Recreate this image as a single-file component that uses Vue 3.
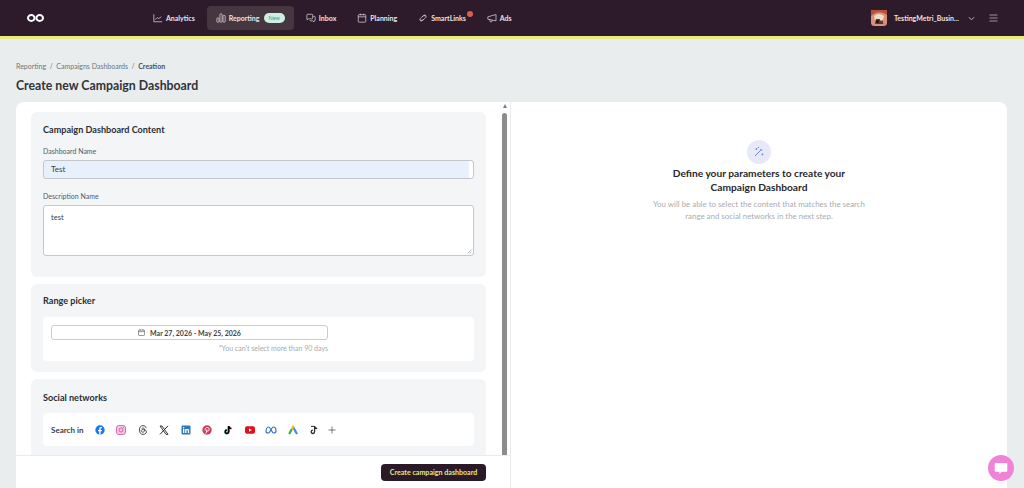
<script setup>
const navItems = [
  { label: "Analytics", icon: "analytics" },
  { label: "Reporting", icon: "reporting", active: true, badge: "New" },
  { label: "Inbox", icon: "inbox" },
  { label: "Planning", icon: "planning" },
  { label: "SmartLinks", icon: "links", dot: true },
  { label: "Ads", icon: "ads" },
];
</script>

<template>
  <div class="page">
    <header class="topbar">
      <svg class="logo" viewBox="0 0 17 8" width="17" height="8" fill="none" stroke="#fff" stroke-width="2">
        <ellipse cx="4.3" cy="4" rx="3.3" ry="3" />
        <ellipse cx="12.7" cy="4" rx="3.3" ry="3" />
      </svg>
      <nav class="nav">
        <a v-for="item in navItems" :key="item.label" class="nav-item" :class="{ active: item.active }">
          <svg class="nav-icon" viewBox="0 0 12 12" width="10" height="10" fill="none" stroke="#d9d3d8" stroke-width=".9">
            <template v-if="item.icon === 'analytics'">
              <path d="M1 1.5V10.5H11" />
              <path d="M2.5 8L5 5.5L6.8 6.8L10 4.5" />
            </template>
            <template v-else-if="item.icon === 'reporting'">
              <rect x="1" y="6" width="2.6" height="5" rx=".6" />
              <rect x="4.7" y="1" width="2.6" height="10" rx=".6" />
              <rect x="8.4" y="3" width="2.6" height="8" rx=".6" />
            </template>
            <template v-else-if="item.icon === 'inbox'">
              <path d="M1 2.5a1 1 0 0 1 1-1h5a1 1 0 0 1 1 1V6a1 1 0 0 1-1 1H3L1.2 8.2Z" />
              <path d="M8.6 4H10a1 1 0 0 1 1 1v3.4a1 1 0 0 1-1 1H9.7V10.6L8 9.4H5.6A1 1 0 0 1 4.6 8.4" />
            </template>
            <template v-else-if="item.icon === 'planning'">
              <rect x="1.5" y="2" width="9" height="9" rx="1" />
              <path d="M1.5 4.6H10.5M4 .8V2.8M8 .8V2.8" />
            </template>
            <template v-else-if="item.icon === 'links'">
              <path d="M2.4 8.6L4.8 8.8A2.4 2.4 0 0 0 6.6 8L9.6 5A1.8 1.8 0 0 0 7.2 2.6L5 4.8" />
              <path d="M9.5 3.4L7.2 3.2A2.4 2.4 0 0 0 5.4 4L2.4 7A1.8 1.8 0 0 0 4.8 9.4L7 7.2" />
            </template>
            <template v-else>
              <path d="M1 4.6L10.8 1.8V9.4L1 7.4Z" stroke-linejoin="round" />
              <path d="M3.4 7.9V9.6a.8.8 0 0 0 .8.8H5.4a.8.8 0 0 0 .8-.8V8.5" />
            </template>
          </svg>
          <span>{{ item.label }}</span>
          <span v-if="item.badge" class="badge">{{ item.badge }}</span>
          <i v-if="item.dot" class="dot"></i>
        </a>
      </nav>
      <div class="account">
        <svg class="avatar" viewBox="0 0 16 16" width="16" height="16">
          <rect width="16" height="16" rx="3.5" fill="#d9907f" />
          <path d="M0 6Q8 -1 16 5V0H0Z" fill="#b5533f" />
          <path d="M3 6Q8 2 13 6L12 10H4Z" fill="#f1dcc3" />
          <path d="M5 9h6l1.5 5H4Z" fill="#5c3a2c" />
          <circle cx="6.4" cy="11.6" r="1.6" fill="#1e1511" />
          <circle cx="10.2" cy="9.6" r="1.2" fill="#f6ead8" />
        </svg>
        <span class="account-name">TestingMetri_Busin...</span>
        <svg class="chevron" viewBox="0 0 8 5" width="7" height="5" fill="none" stroke="#cfc9ce" stroke-width="1">
          <path d="M1 1L4 4L7 1" />
        </svg>
        <svg class="burger" viewBox="0 0 9 8" width="9" height="8" fill="none" stroke="#a99fa8" stroke-width=".9">
          <path d="M.5 1H8.5M.5 4H8.5M.5 7H8.5" />
        </svg>
      </div>
    </header>

    <main class="content">
      <div class="crumbs">
        <span>Reporting</span><span>/</span><span>Campaigns Dashboards</span><span>/</span><b>Creation</b>
      </div>
      <h1 class="page-title">Create new Campaign Dashboard</h1>

      <section class="card">
        <div class="left">
          <div class="scroll-area">
            <div class="panel panel-form">
              <h2>Campaign Dashboard Content</h2>
              <label>Dashboard Name</label>
              <div class="input filled">Test</div>
              <label class="second">Description Name</label>
              <div class="input area">
                test
                <svg class="grip" viewBox="0 0 5 5" width="5" height="5" stroke="#8b8f93" stroke-width=".6">
                  <path d="M.5 4.5L4.5 .5M2.6 4.5L4.5 2.6" />
                </svg>
              </div>
            </div>

            <div class="panel panel-range">
              <h2>Range picker</h2>
              <div class="inner range-inner">
                <div class="date-field">
                  <svg viewBox="0 0 8 8" width="7" height="7" fill="none" stroke="#50545a" stroke-width=".7">
                    <rect x=".6" y="1.2" width="6.8" height="6.2" rx=".7" />
                    <path d="M.6 3H7.4M2.4 .3V1.8M5.6 .3V1.8" />
                  </svg>
                  <span>Mar 27, 2026 - May 25, 2026</span>
                </div>
                <p class="hint">*You can't select more than 90 days</p>
              </div>
            </div>

            <div class="panel panel-social">
              <h2>Social networks</h2>
              <div class="inner social-inner">
                <span class="search-label">Search in</span>
                <div class="networks">
                  <svg viewBox="0 0 10 10" width="10" height="10">
                    <circle cx="5" cy="5" r="4.7" fill="#1877f2" />
                    <path d="M4.2 9.7V6.3H3V4.9H4.2V3.9C4.2 2.7 4.9 2 6 2L6.9 2.1V3.3H6.3C5.7 3.3 5.6 3.6 5.6 4V4.9H6.9L6.7 6.3H5.6V9.7Z" fill="#fff" />
                  </svg>
                  <svg viewBox="0 0 10 10" width="10" height="10" fill="none">
                    <rect x=".5" y=".5" width="9" height="9" rx="2.4" fill="#f4c7e4" stroke="#d85fa8" stroke-width=".9" />
                    <circle cx="5" cy="5" r="2" stroke="#c94f9c" stroke-width=".8" />
                    <circle cx="7.4" cy="2.6" r=".5" fill="#c94f9c" />
                  </svg>
                  <svg viewBox="0 0 10 10" width="10" height="10" fill="none" stroke="#3a3a3a" stroke-width=".9">
                    <path d="M8.2 3.2C7.8 1.4 6.6.6 5 .6 2.6.6 1.4 2.4 1.4 5S2.6 9.4 5 9.4c2 0 3.4-1.1 3.4-2.5 0-1.5-1.4-2.3-3.2-2.3-1.2 0-2 .5-2 1.3S4 7.2 4.8 7.2C6 7.2 6.6 6.2 6.6 5 6.6 3.8 6 3 5 3 4.4 3 3.9 3.3 3.6 3.7" />
                  </svg>
                  <svg viewBox="0 0 10 10" width="10" height="10" fill="none" stroke="#222" stroke-width="1">
                    <path d="M9 .8L1 9.4" />
                    <path d="M1 1H3L9 9.4H7Z" stroke-width=".9" />
                  </svg>
                  <svg viewBox="0 0 10 10" width="10" height="10">
                    <rect x=".5" y=".5" width="9" height="9" rx="1" fill="#2f78b7" />
                    <rect x="2" y="4" width="1.3" height="4" fill="#fff" />
                    <circle cx="2.65" cy="2.7" r=".75" fill="#fff" />
                    <path d="M4.2 4H5.4V4.6C5.7 4.1 6.2 3.9 6.7 3.9 7.6 3.9 8.1 4.5 8.1 5.6V8H6.8V5.9C6.8 5.3 6.6 5 6.2 5 5.7 5 5.5 5.3 5.5 5.9V8H4.2Z" fill="#fff" />
                  </svg>
                  <svg viewBox="0 0 10 10" width="10" height="10">
                    <circle cx="5" cy="5" r="4.7" fill="#d13a5c" />
                    <path d="M4 8.6L5 4.4M3.3 5.5C2.6 3.8 3.8 2.4 5.2 2.4 6.6 2.4 7.4 3.4 7.1 4.8 6.8 6.2 5.4 6.8 4.6 5.8" fill="none" stroke="#fff" stroke-width=".9" />
                  </svg>
                  <svg viewBox="0 0 10 10" width="10" height="10" fill="none">
                    <path d="M5.6 1V6.8A1.7 1.7 0 1 1 3.9 5.1M5.6 1.3C5.9 2.6 6.8 3.4 8.2 3.5" stroke="#25e0da" stroke-width="1.5" transform="translate(-.4 .2)" />
                    <path d="M5.6 1V6.8A1.7 1.7 0 1 1 3.9 5.1M5.6 1.3C5.9 2.6 6.8 3.4 8.2 3.5" stroke="#f0305a" stroke-width="1.5" transform="translate(.4 -.1)" />
                    <path d="M5.6 1V6.8A1.7 1.7 0 1 1 3.9 5.1M5.6 1.3C5.9 2.6 6.8 3.4 8.2 3.5" stroke="#000" stroke-width="1.5" />
                  </svg>
                  <svg viewBox="0 0 10 10" width="10" height="10">
                    <rect y="1.3" width="10" height="7.4" rx="2" fill="#e0101a" />
                    <path d="M4 3.3L6.8 5L4 6.7Z" fill="#fff" />
                  </svg>
                  <svg class="meta" viewBox="0 0 12 10" width="12" height="10" fill="none" stroke="#2f6fc0" stroke-width="1.2">
                    <path d="M1 6.6C1 4 2.2 2 3.6 2 5.6 2 6.4 8 8.8 8 10.2 8 11 7.2 11 5.8 11 3.6 9.8 2 8.4 2 6.4 2 5.6 8 3 8 1.8 8 1 7.6 1 6.6Z" />
                  </svg>
                  <svg viewBox="0 0 10 10" width="10" height="10" fill="none" stroke-linecap="round" stroke-width="2.2">
                    <path d="M5 2L8.6 8.2" stroke="#4285f4" />
                    <path d="M5 2L3.2 5.2" stroke="#fbbc04" />
                    <path d="M3.2 5.2L1.6 8.2" stroke="#34a853" />
                  </svg>
                  <svg viewBox="0 0 10 10" width="10" height="10" fill="none" stroke="#2b2b2b" stroke-width="1.3">
                    <path d="M5.6 1V6.8A1.7 1.7 0 1 1 3.9 5.1M5.6 1.3C5.9 2.6 6.8 3.4 8.2 3.5" />
                    <path d="M2 1.4H5" stroke-width="1" />
                  </svg>
                  <svg class="plus" viewBox="0 0 8 8" width="8" height="8" stroke="#55595e" stroke-width=".8">
                    <path d="M4 .5V7.5M.5 4H7.5" />
                  </svg>
                </div>
              </div>
            </div>

            <div class="scrollbar">
              <i class="scroll-arrow"></i>
              <i class="scroll-thumb"></i>
            </div>
          </div>

          <footer class="footer">
            <button class="create-btn">Create campaign dashboard</button>
          </footer>
        </div>

        <div class="right">
          <div class="wand">
            <svg viewBox="0 0 12 12" width="12" height="12" fill="none" stroke="#5867c4" stroke-width=".8">
              <path d="M2 10L8.6 3.4M7.4 2.9L9.1 4.6" />
              <path d="M3.4 2V4M2.4 3H4.4M9.4 7.4V9.4M8.4 8.4H10.4M5.4 1V2M4.9 1.5H5.9" stroke-width=".6" />
            </svg>
          </div>
          <h3>Define your parameters to create your<br />Campaign Dashboard</h3>
          <p>You will be able to select the content that matches the search<br />range and social networks in the next step.</p>
        </div>
      </section>
    </main>

    <button class="chat">
      <svg viewBox="0 0 14 13" width="14" height="13">
        <path d="M1.5 1H12.5A.8.8 0 0 1 13.3 1.8V9A.8.8 0 0 1 12.5 9.8H7.6L5.4 12V9.8H1.5A.8.8 0 0 1 .7 9V1.8A.8.8 0 0 1 1.5 1Z" fill="#fff" />
      </svg>
    </button>
  </div>
</template>

<style>
html,
body {
  margin: 0;
  height: 100%;
  overflow: hidden;
}
</style>

<style scoped>
.page {
  height: 100vh;
  display: flex;
  flex-direction: column;
  background: #e9edee;
  color: #2b2d31;
  font-family: Lato, "Open Sans", sans-serif;
}
.topbar {
  flex: none;
  height: 37px;
  box-sizing: border-box;
  display: flex;
  align-items: center;
  background: #2d1b2c;
  border-bottom: 1px solid #1c0f18;
  padding-left: 27px;
  padding-right: 26px;
  position: relative;
  margin-bottom: 3px;
}
.topbar::after {
  content: "";
  position: absolute;
  left: 0;
  right: 0;
  top: 36px;
  height: 3px;
  background: #e8ec80;
}
.logo {
  flex: none;
}
.nav {
  display: flex;
  align-items: center;
  gap: 3px;
  margin-left: 100px;
}
.nav-item {
  position: relative;
  display: flex;
  align-items: center;
  gap: 3px;
  height: 24px;
  padding: 0 9px;
  border-radius: 4px;
  color: #e8e3e7;
  font-size: 7px;
  font-weight: 700;
}
.nav-item.active {
  background: #46363f;
}
.nav-icon {
  flex: none;
}
.badge {
  margin-left: 1px;
  padding: 0 5px;
  height: 10px;
  line-height: 10px;
  border-radius: 6px;
  background: #cdeee0;
  color: #4c9a80;
  font-size: 5.5px;
  font-weight: 400;
}
.dot {
  position: absolute;
  top: 5px;
  right: 2px;
  width: 6px;
  height: 6px;
  border-radius: 50%;
  background: #dc5f4d;
}
.account {
  margin-left: auto;
  display: flex;
  align-items: center;
}
.account-name {
  margin-left: 7px;
  color: #e8e3e7;
  font-size: 7px;
  font-weight: 700;
}
.chevron {
  margin-left: 9px;
}
.burger {
  margin-left: 14px;
}
.content {
  flex: 1;
  min-height: 0;
  display: flex;
  flex-direction: column;
  padding: 21px 17px 0 16px;
}
.crumbs {
  display: flex;
  gap: 3.5px;
  font-size: 7px;
  line-height: 10px;
  color: #70767c;
}
.crumbs b {
  color: #4a4e54;
  font-weight: 700;
}
.page-title {
  margin: 7px 0 8px;
  font-size: 12.3px;
  line-height: 16px;
  font-weight: 700;
  color: #303338;
}
.card {
  flex: 1;
  min-height: 0;
  display: flex;
  background: #fff;
  border-radius: 8px 8px 0 0;
}
.left {
  flex: none;
  width: 495px;
  display: flex;
  flex-direction: column;
  border-right: 1px solid #e8eaec;
  box-sizing: border-box;
}
.scroll-area {
  position: relative;
  flex: 1;
  min-height: 0;
  overflow: hidden;
  padding: 10px 24px 0 15px;
  display: flex;
  flex-direction: column;
  gap: 7px;
}
.panel {
  flex: none;
  background: #f3f5f7;
  border-radius: 6px;
  padding: 12px 12px 0;
  box-sizing: border-box;
}
.panel-form {
  height: 165px;
}
.panel-range {
  height: 88px;
  padding-top: 11px;
}
.panel-social {
  height: 90px;
  padding-top: 13px;
}
h2 {
  margin: 0;
  font-size: 9.1px;
  line-height: 12px;
  font-weight: 700;
  color: #2b2d31;
}
label {
  display: block;
  margin-top: 11px;
  font-size: 7px;
  line-height: 9px;
  color: #55595f;
}
label.second {
  margin-top: 13px;
}
.input {
  position: relative;
  margin-top: 4px;
  box-sizing: border-box;
  background: #fff;
  border: 1px solid #c3c6ca;
  border-radius: 3px;
  padding: 0 7px;
  font-size: 8px;
  color: #3a3d42;
}
.input.filled {
  height: 19px;
  line-height: 17px;
  background: linear-gradient(to right, #e8f0fd calc(100% - 4px), #fff calc(100% - 4px));
}
.input.area {
  height: 51px;
  padding-top: 7px;
  line-height: 10px;
  font-size: 7.5px;
}
.grip {
  position: absolute;
  right: 1px;
  bottom: 1px;
}
.inner {
  background: #fff;
  border-radius: 4px;
  box-sizing: border-box;
}
.range-inner {
  margin-top: 10px;
  height: 44px;
  padding: 8px 8px 0;
}
.date-field {
  width: 277px;
  height: 15px;
  box-sizing: border-box;
  border: 1px solid #c9ccd0;
  border-radius: 3px;
  display: flex;
  align-items: center;
  justify-content: center;
  gap: 5px;
  font-size: 7px;
  font-weight: 700;
  color: #3f4247;
}
.hint {
  width: 277px;
  margin: 4px 0 0;
  text-align: right;
  font-size: 7px;
  line-height: 8px;
  color: #a6aaae;
}
.social-inner {
  margin-top: 9px;
  height: 33px;
  display: flex;
  align-items: center;
  padding-left: 8px;
}
.search-label {
  width: 33px;
  white-space: nowrap;
  font-size: 8px;
  font-weight: 700;
  color: #3d4045;
}
.networks {
  display: flex;
  align-items: center;
  gap: 11.4px;
  margin-left: 11px;
}
.meta {
  margin: 0 -1px;
}
.plus {
  margin-left: -2.5px;
}
.scrollbar {
  position: absolute;
  top: 0;
  right: 0;
  bottom: 0;
  width: 9px;
  margin-right: 1px;
  display: flex;
  flex-direction: column;
  align-items: center;
}
.scroll-arrow {
  margin-top: 2px;
  width: 0;
  height: 0;
  border-left: 2.5px solid transparent;
  border-right: 2.5px solid transparent;
  border-bottom: 4px solid #7c7c7c;
}
.scroll-thumb {
  margin-top: 5px;
  width: 5px;
  flex: 1;
  background: #8c8c8c;
  border-radius: 3px 3px 0 0;
}
.footer {
  flex: none;
  height: 33px;
  box-sizing: border-box;
  border-top: 1px solid #e9ebed;
  display: flex;
  justify-content: flex-end;
  align-items: flex-start;
  padding: 8px 24px 0 0;
  background: #fff;
}
.create-btn {
  width: 105px;
  height: 17px;
  padding: 0;
  border: 0;
  border-radius: 4px;
  background: #2a1a28;
  color: #e6e58c;
  font-family: inherit;
  font-size: 7.1px;
  font-weight: 700;
}
.right {
  flex: 1;
  display: flex;
  flex-direction: column;
  align-items: center;
  padding-top: 38px;
  text-align: center;
}
.wand {
  width: 24px;
  height: 24px;
  border-radius: 50%;
  background: #e7e9f8;
  display: flex;
  align-items: center;
  justify-content: center;
}
.right h3 {
  margin: 2px 0 0;
  font-size: 10.2px;
  line-height: 14px;
  font-weight: 700;
  color: #26282c;
}
.right p {
  margin: 4px 0 0;
  font-size: 7.9px;
  line-height: 12px;
  color: #a9adb1;
}
.chat {
  position: fixed;
  left: 988px;
  top: 455px;
  width: 26px;
  height: 26px;
  padding: 0;
  border: 0;
  border-radius: 50%;
  background: #f082d8;
  display: flex;
  align-items: center;
  justify-content: center;
}
</style>
